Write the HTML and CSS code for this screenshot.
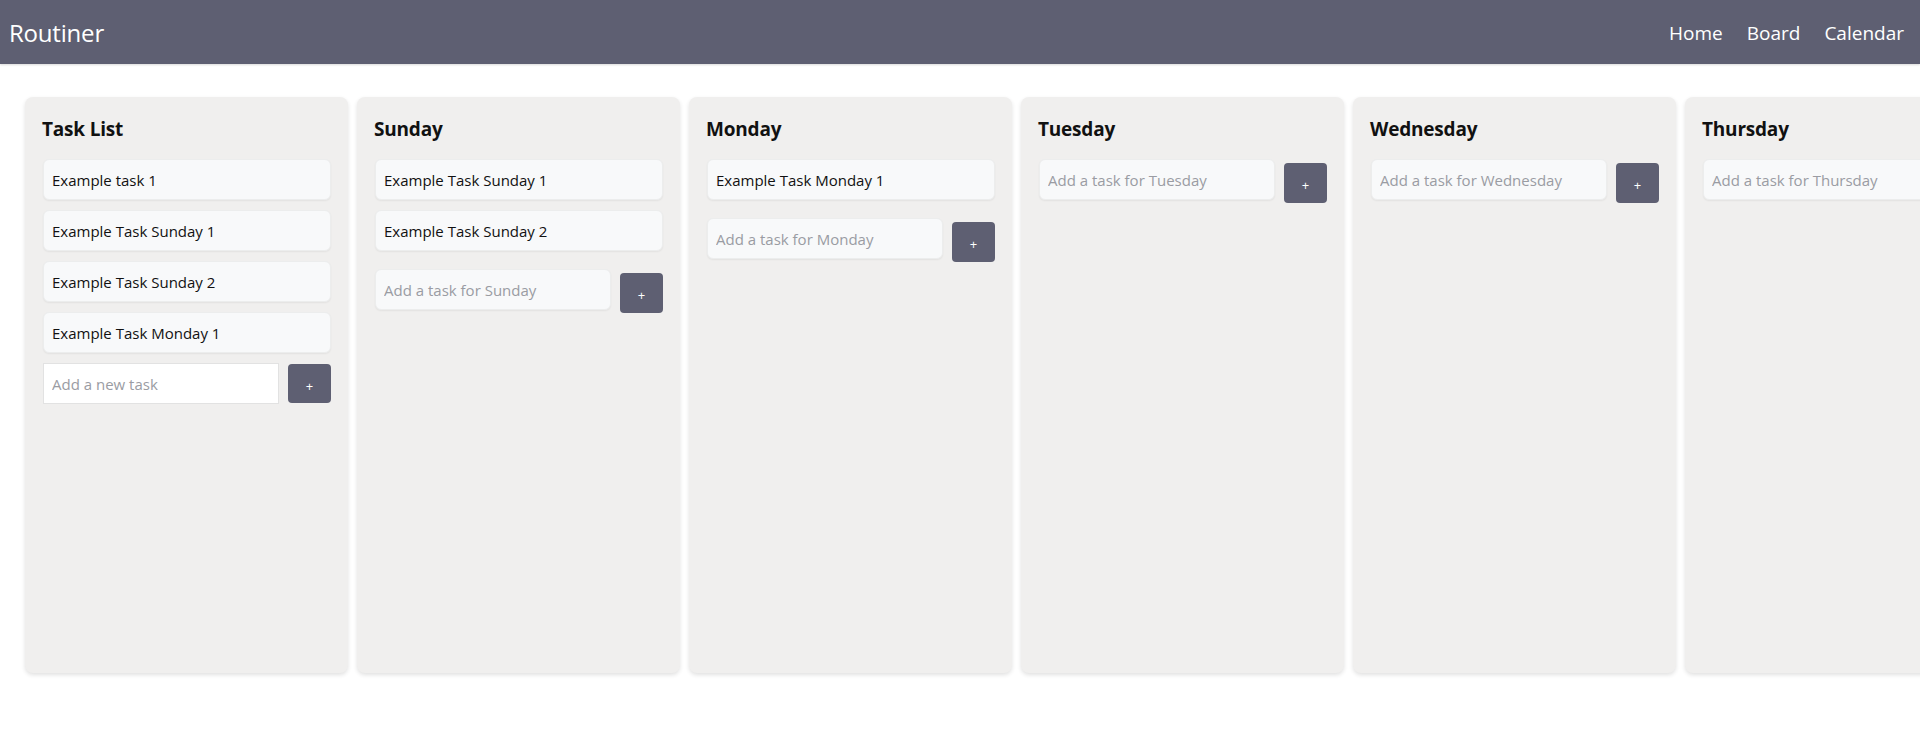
FILE: index.html
```html
<!DOCTYPE html>
<html lang="en">
<head>
    <meta charset="UTF-8">
    <title>Routiner</title>
    <link rel="stylesheet" href="styles.css">
</head>
<body>
<header class="topbar">
    <h1 class="brand">Routiner</h1>
    <nav class="nav">
        <a href="#">Home</a>
        <a href="#">Board</a>
        <a href="#">Calendar</a>
    </nav>
</header>

<main class="board">
    <section class="column">
        <h2 class="column-title">Task List</h2>
        <ul class="task-list">
            <li class="task">Example task 1</li>
            <li class="task">Example Task Sunday 1</li>
            <li class="task">Example Task Sunday 2</li>
            <li class="task">Example Task Monday 1</li>
        </ul>
        <form class="add-form add-form--main">
            <input class="add-input" type="text" placeholder="Add a new task">
            <button class="add-btn" type="button">+</button>
        </form>
    </section>

    <section class="column day">
        <h2 class="column-title">Sunday</h2>
        <ul class="task-list">
            <li class="task">Example Task Sunday 1</li>
            <li class="task">Example Task Sunday 2</li>
        </ul>
        <form class="add-form">
            <input class="add-input" type="text" placeholder="Add a task for Sunday">
            <button class="add-btn" type="button">+</button>
        </form>
    </section>

    <section class="column day">
        <h2 class="column-title">Monday</h2>
        <ul class="task-list">
            <li class="task">Example Task Monday 1</li>
        </ul>
        <form class="add-form">
            <input class="add-input" type="text" placeholder="Add a task for Monday">
            <button class="add-btn" type="button">+</button>
        </form>
    </section>

    <section class="column day">
        <h2 class="column-title">Tuesday</h2>
        <ul class="task-list"></ul>
        <form class="add-form">
            <input class="add-input" type="text" placeholder="Add a task for Tuesday">
            <button class="add-btn" type="button">+</button>
        </form>
    </section>

    <section class="column day">
        <h2 class="column-title">Wednesday</h2>
        <ul class="task-list"></ul>
        <form class="add-form">
            <input class="add-input" type="text" placeholder="Add a task for Wednesday">
            <button class="add-btn" type="button">+</button>
        </form>
    </section>

    <section class="column day">
        <h2 class="column-title">Thursday</h2>
        <ul class="task-list"></ul>
        <form class="add-form">
            <input class="add-input" type="text" placeholder="Add a task for Thursday">
            <button class="add-btn" type="button">+</button>
        </form>
    </section>

    <section class="column day">
        <h2 class="column-title">Friday</h2>
        <ul class="task-list"></ul>
        <form class="add-form">
            <input class="add-input" type="text" placeholder="Add a task for Friday">
            <button class="add-btn" type="button">+</button>
        </form>
    </section>

    <section class="column day">
        <h2 class="column-title">Saturday</h2>
        <ul class="task-list"></ul>
        <form class="add-form">
            <input class="add-input" type="text" placeholder="Add a task for Saturday">
            <button class="add-btn" type="button">+</button>
        </form>
    </section>
</main>
</body>
</html>
```

FILE: styles.css
```css
*{
    margin: 0;
    padding: 0;
    box-sizing: border-box;
}
body{
    font-family: "Open Sans", "Noto Sans", sans-serif;
    color: #111;
    background: #fff;
    overflow: hidden;
}
ul{
    list-style: none;
}

/* top bar */
.topbar{
    height: 64px;
    background: #5e5f72;
    color: #fff;
    display: flex;
    align-items: center;
    justify-content: space-between;
    padding: 0 16px 0 9px;
    box-shadow: 0 1px 2px rgba(0,0,0,0.15);
}
.brand{
    font-size: 24px;
    font-weight: 400;
    letter-spacing: -0.2px;
}
.nav{
    display: flex;
    gap: 24px;
    padding-top: 2px;
}
.nav a{
    color: #fff;
    text-decoration: none;
    font-size: 19px;
}

/* board */
.board{
    display: flex;
    gap: 9px;
    padding: 33px 25px;
    overflow: hidden;
}
.column{
    flex: 0 0 323px;
    height: 576px;
    background: #f0efee;
    border-radius: 8px;
    box-shadow: 0 2px 4px rgba(0,0,0,0.12);
    padding: 18px 17px 17px 18px;
}
.column-title{
    font-size: 19px;
    font-weight: 700;
    line-height: 28px;
    margin: 0 0 16px -1px;
    letter-spacing: -0.2px;
}
.task-list{
    display: flex;
    flex-direction: column;
    gap: 10px;
    margin-bottom: 10px;
}
.day .task-list{
    margin-bottom: 18px;
}
.task-list:empty{
    display: none;
}
.task{
    height: 41px;
    line-height: 40px;
    padding: 0 8px;
    background: #f8f9fa;
    border: 1px solid #eceded;
    border-radius: 6px;
    box-shadow: 0 1px 2px rgba(0,0,0,0.06);
    font-size: 15px;
}

/* add form */
.add-form{
    display: flex;
    align-items: flex-start;
    gap: 9px;
}
.add-input{
    width: 236px;
    height: 41px;
    padding: 0 8px;
    font: inherit;
    font-size: 15px;
    color: #111;
    background: #f8f9fa;
    border: 1px solid #eceded;
    border-radius: 6px;
    box-shadow: 0 1px 2px rgba(0,0,0,0.06);
    outline: none;
}
.add-input::placeholder{
    color: #9a9ca3;
}
.add-btn{
    width: 43px;
    height: 40px;
    margin-top: 4px;
    background: #5e5f72;
    color: #fff;
    border: 0;
    border-radius: 4px;
    font: inherit;
    font-size: 13px;
    padding-top: 4px;
    cursor: pointer;
}
.add-form--main{
    align-items: center;
}
.add-form--main .add-input{
    background: #fff;
    border: 1px solid #e2e2e2;
    border-radius: 0;
    box-shadow: none;
}
.add-form--main .add-btn{
    height: 39px;
    margin-top: 0;
}
```
